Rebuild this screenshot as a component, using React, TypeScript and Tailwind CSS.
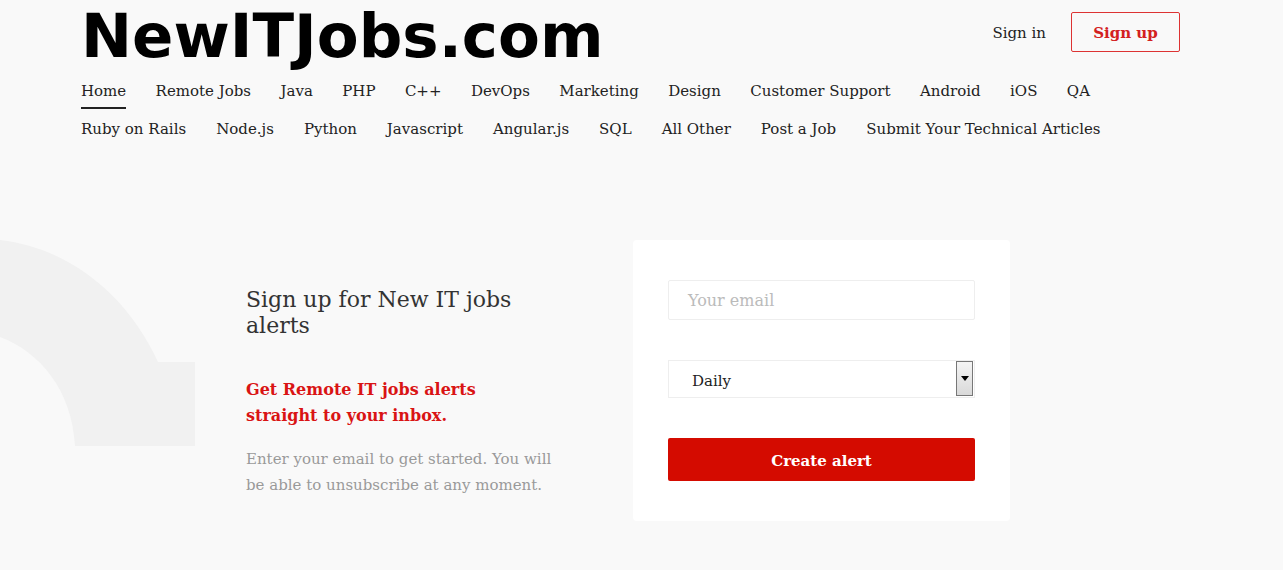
const row1 = ["Home", "Remote Jobs", "Java", "PHP", "C++", "DevOps", "Marketing", "Design", "Customer Support", "Android", "iOS", "QA"];
const row2 = ["Ruby on Rails", "Node.js", "Python", "Javascript", "Angular.js", "SQL", "All Other", "Post a Job", "Submit Your Technical Articles"];

function Decoration() {
  return (
    <svg className="absolute left-0 top-[240px]" width="200" height="210" viewBox="0 0 200 210">
      <path
        d="M0 0 C70 8 128 56 158 122 L195 122 L195 206 L75 206 C72 150 40 112 0 97 Z"
        fill="#f1f1f1"
      />
    </svg>
  );
}

export default function App() {
  return (
    <div className="relative min-h-[570px] bg-[#f9f9f9] overflow-hidden" style={{ fontFamily: '"DejaVu Serif", serif' }}>
      <Decoration />
      <header className="relative pl-[81px] pr-[103px]">
        <div className="flex items-start justify-between">
          <div
            className="text-[61px] leading-[72px] font-bold text-black"
            style={{ fontFamily: '"DejaVu Sans", Verdana, sans-serif' }}
          >
            NewITJobs.com
          </div>
          <div className="flex items-center gap-[25px] pt-[12px]">
            <a className="text-[15px] text-[#222] pt-[3px]">Sign in</a>
            <a className="h-[40px] w-[109px] flex items-center justify-center border border-[#d33] rounded-[2px] text-[15px] font-bold text-[#d32020] pt-[2px]">
              Sign up
            </a>
          </div>
        </div>
        <nav className="mt-[8px] text-[15px] text-[#222]">
          <ul className="flex gap-[29.4px] h-[38px] items-start">
            {row1.map((item, i) => (
              <li key={item} className={i === 0 ? "pb-[4px] border-b-2 border-[#222]" : ""}>
                {item}
              </li>
            ))}
          </ul>
          <ul className="flex gap-[30px]">
            {row2.map((item) => (
              <li key={item}>{item}</li>
            ))}
          </ul>
        </nav>
      </header>

      <main className="relative flex gap-[77px] pl-[246px] mt-[99px]">
        <div className="w-[310px] pt-[47px]">
          <h2 className="text-[22px] leading-[26px] text-[#333]">Sign up for New IT jobs alerts</h2>
          <p className="mt-[38px] max-w-[270px] text-[16px] leading-[26px] font-bold text-[#d91414]">
            Get Remote IT jobs alerts straight to your inbox.
          </p>
          <p className="mt-[17px] text-[15px] leading-[26px] text-[#999]">
            Enter your email to get started. You will be able to unsubscribe at any moment.
          </p>
        </div>
        <div className="w-[377px] h-[281px] bg-white rounded-[4px] px-[35px] pt-[40px]">
          <div className="h-[40px] border border-[#eee] rounded-[2px] flex items-center px-[19px] pt-[3px] text-[16px] text-[#bbb]">
            Your email
          </div>
          <div className="mt-[40px] h-[38px] border border-[#eee] flex items-center justify-between pl-[23px] pr-[1px] text-[15px] text-[#222]">
            <span className="pt-[5px]">Daily</span>
            <div className="w-[17px] h-[35px] border border-[#777] bg-gradient-to-b from-[#f4f4f4] to-[#d9d9d9] flex items-center justify-center">
              <svg width="8" height="5" viewBox="0 0 8 5">
                <path d="M0 0 H8 L4 5 Z" fill="#000" />
              </svg>
            </div>
          </div>
          <button className="mt-[40px] w-full h-[43px] bg-[#d40b00] rounded-[2px] text-white font-bold text-[15px] pt-[4px]">
            Create alert
          </button>
        </div>
      </main>
    </div>
  );
}
